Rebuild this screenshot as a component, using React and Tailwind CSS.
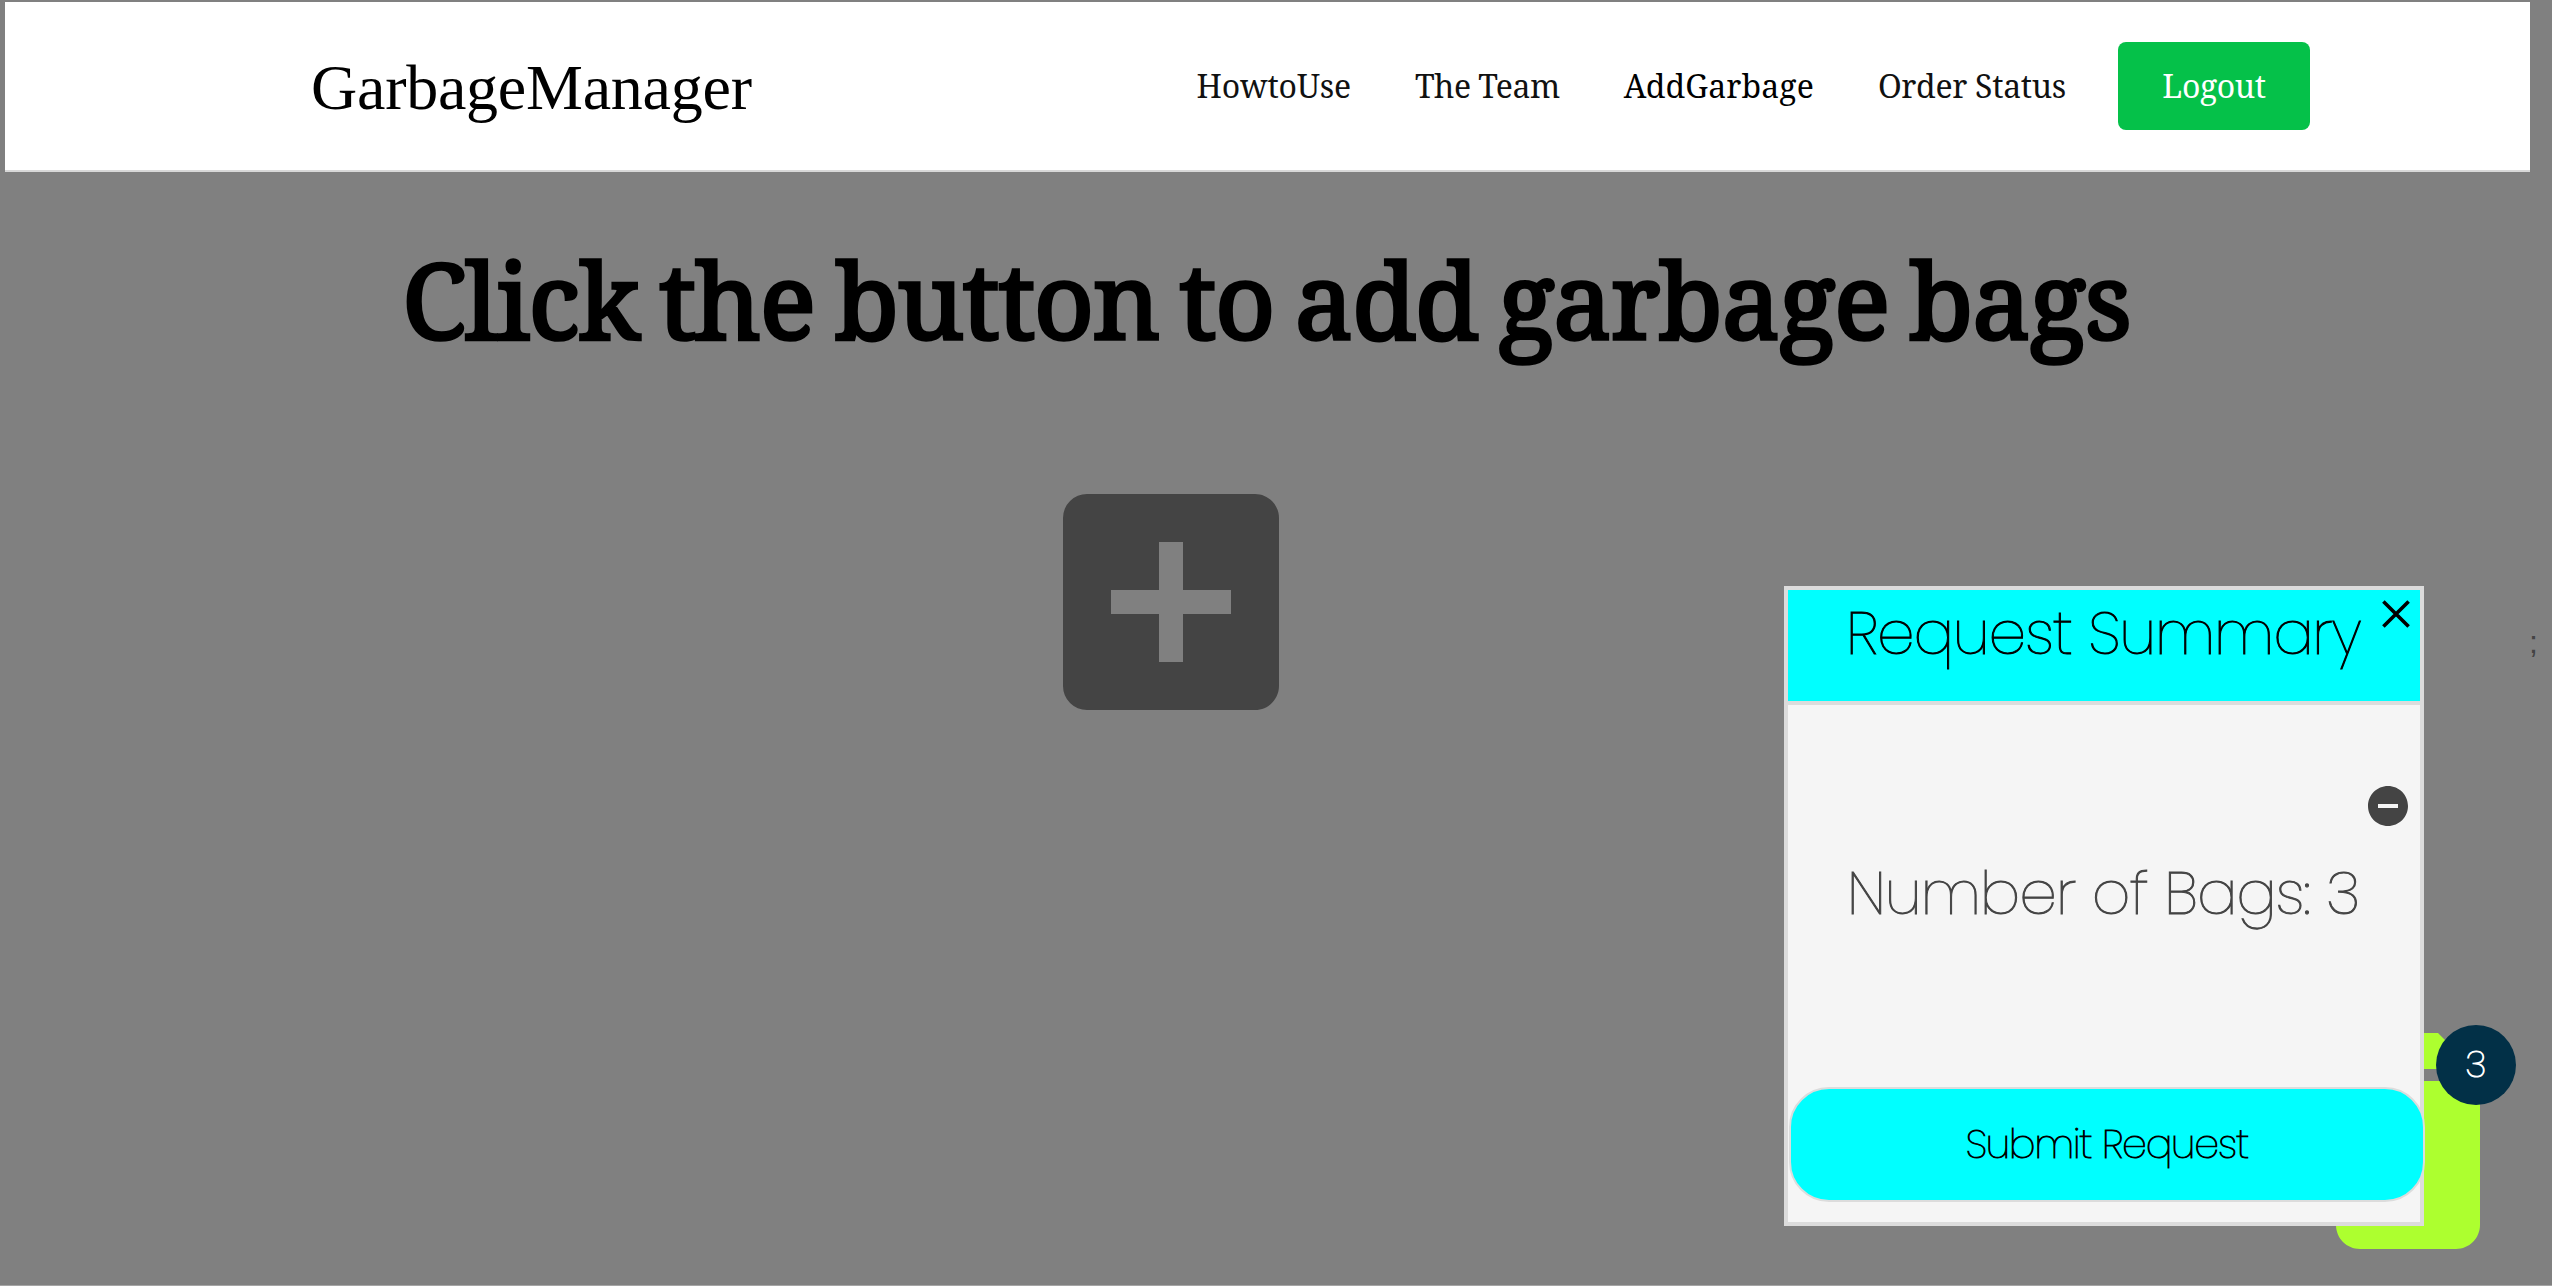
import { MdAddBox, MdDelete, MdRemoveCircle } from "react-icons/md";

const links = [
  { label: "HowtoUse", className: "text-[#111] mr-[64px] tracking-[-0.14px]" },
  { label: "The Team", className: "text-[#111] mr-[64px] tracking-[-0.5px]" },
  { label: "AddGarbage", className: "text-black mr-[64px] tracking-[0.1px]" },
  { label: "Order Status", className: "text-[#111] mr-[52px] tracking-[-0.3px]" },
];

function Navbar() {
  return (
    <header className="ml-[5px] mr-[22px] flex h-[170px] items-center justify-between border-b-2 border-[#d8d8d8] bg-white pl-[306px] pr-[220px] font-normal">
      <a className="pt-[4px] font-['Liberation_Serif',serif] text-[64px] leading-[72px] tracking-[-0.25px] text-black">GarbageManager</a>
      <nav className="flex items-center font-['Noto_Serif','DejaVu_Serif_Condensed',serif] text-[32px] leading-[44px] whitespace-nowrap">
        {links.map((link) => (
          <a key={link.label} className={link.className}>{link.label}</a>
        ))}
        <button className="h-[88px] w-[192px] rounded-[8px] bg-[#05c149] tracking-[-0.4px] text-white">Logout</button>
      </nav>
    </header>
  );
}

function SummaryPanel() {
  return (
    <section className="absolute top-[586px] left-[1784px] flex h-[640px] w-[640px] flex-col border-4 border-[#dcdcdc] bg-[#f5f5f5] [-webkit-text-stroke:1px]">
      <div className="flex h-[115px] justify-between border-b-4 border-[#dcdcdc] bg-[#00ffff] pl-[58px] pr-[10px]">
        <h2 className="-mt-[2px] text-[60px] leading-[90px] tracking-[-1.12px] whitespace-nowrap text-black">Request Summary</h2>
        <svg viewBox="0 0 28 28" className="mt-[10px] size-[28px] shrink-0 text-black" stroke="currentColor" strokeWidth="3.6">
          <path d="M1.4 1.4 26.6 26.6M26.6 1.4 1.4 26.6" />
        </svg>
      </div>
      <MdRemoveCircle strokeWidth="0" className="mt-[77px] mr-[8px] size-[48px] self-end text-[#444]" />
      <p className="mt-[18px] pl-[59px] text-[60px] leading-[90px] tracking-[-0.95px] whitespace-nowrap text-[#444]">Number of Bags: 3</p>
      <button className="mt-auto mb-[20px] ml-px h-[115px] w-[636px] rounded-[40px] border-2 border-[#dcdcdc] bg-[#00ffff] text-[39.5px] tracking-[-1.1px] text-black">
        Submit Request
      </button>
    </section>
  );
}

export default function App() {
  return (
    <div className="relative h-[1286px] w-full overflow-hidden border-b border-[#a5a5a5] bg-[#808080] pt-[2px] font-['Poppins','Inter',sans-serif] font-extralight">
      <Navbar />
      <h1 className="mr-[19px] mt-[56px] text-center font-['Noto_Serif','DejaVu_Serif_Condensed',serif] text-[104px] leading-[142px] font-normal tracking-[-1px] [word-spacing:-5.6px] whitespace-nowrap text-black [-webkit-text-stroke:3.6px]">
        Click the button to add garbage bags
      </h1>
      <MdAddBox className="mt-[88px] ml-[1027px] size-[288px] text-[#444]" />
      <span className="absolute top-[620px] left-[2529px] font-['Liberation_Sans',sans-serif] text-[32px] leading-[44px] font-normal text-[#444]">;</span>
      <MdDelete className="absolute top-[997px] left-[2264px] size-[288px] text-[#adff2f]" />
      <SummaryPanel />
      <span className="absolute top-[1025px] left-[2436px] flex size-[80px] items-center justify-center rounded-full bg-[#023047] text-[37px] text-white [-webkit-text-stroke:1px]">3</span>
    </div>
  );
}
